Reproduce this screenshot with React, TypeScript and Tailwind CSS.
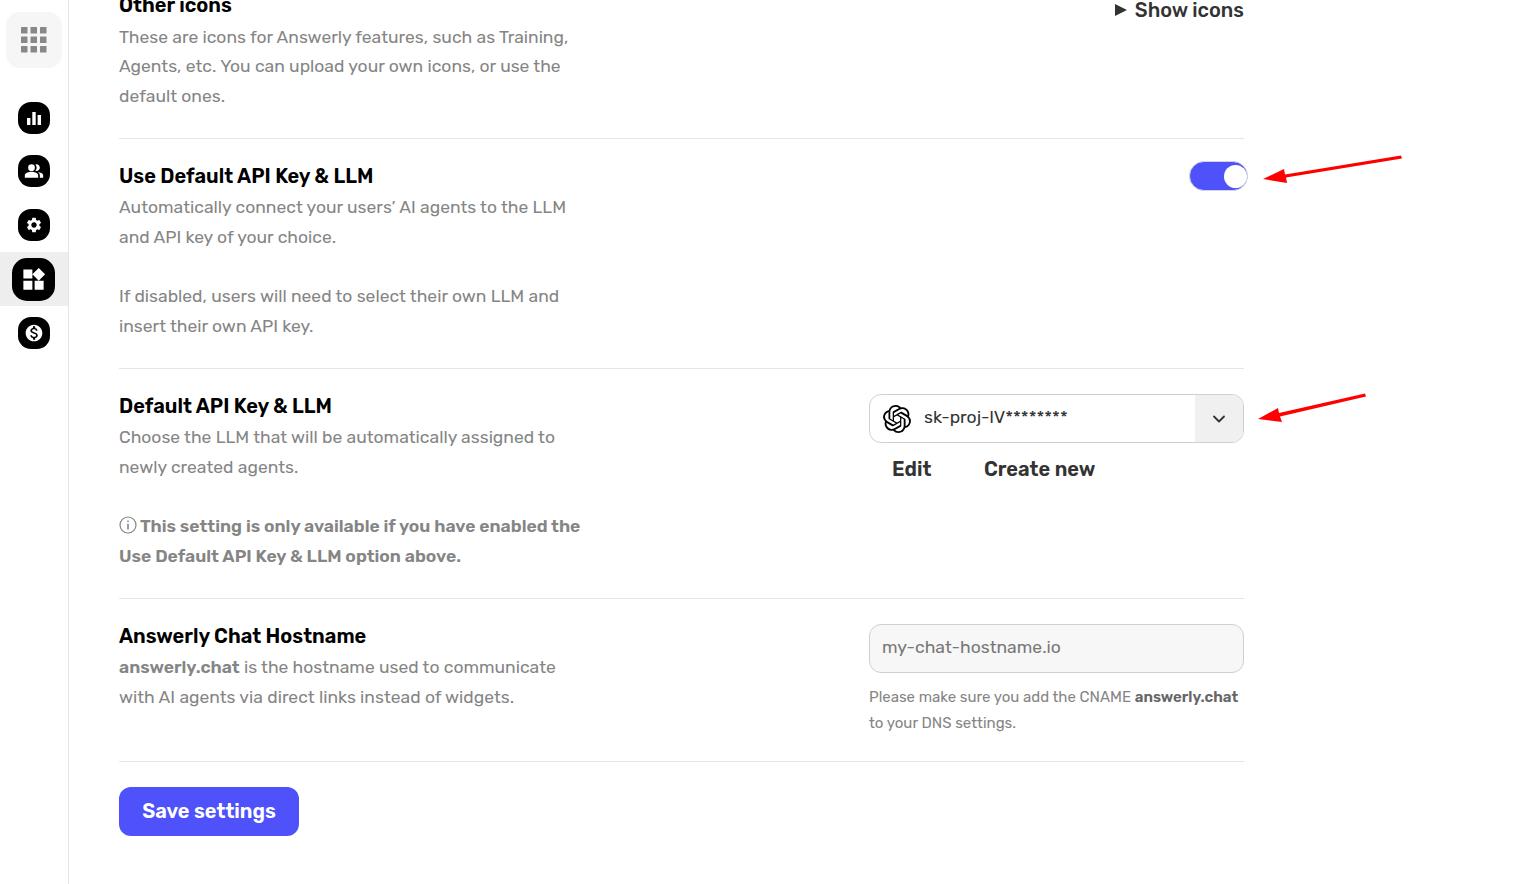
import { ChevronDown } from 'lucide-react'
import { MdPeopleAlt, MdSettings, MdWidgets, MdMonetizationOn } from 'react-icons/md'
import { SiOpenai } from 'react-icons/si'
import type { ReactNode } from 'react'

function SideIcon({ children, active, low }: { children: ReactNode; active?: boolean; low?: boolean }) {
  return (
    <div className={`flex h-[54px] w-full items-center justify-center ${active ? 'bg-[#eeeeee]' : ''}`}>
      <div
        className={`flex items-center justify-center bg-black text-white ${
          active ? 'mr-[1px] h-[43px] w-[43px] rounded-[15px]' : 'h-[32px] w-[32px] rounded-[13px]'
        } ${low ? 'translate-y-[1px]' : ''}`}
      >
        {children}
      </div>
    </div>
  )
}

function Sidebar() {
  return (
    <aside className="flex h-[884px] w-[69px] shrink-0 flex-col items-center border-r border-[#e5e5e5]">
      <div className="mt-[12px] flex h-[56px] w-[56px] items-center justify-center rounded-[14px] bg-[#f6f6f6]">
        <svg width="26" height="26" viewBox="0 0 26 26" fill="#888888">
          <rect x="0" y="0" width="6.5" height="6.5" rx="0.5" />
          <rect x="9.5" y="0" width="6.5" height="6.5" rx="0.5" />
          <rect x="19" y="0" width="6.5" height="6.5" rx="0.5" />
          <rect x="0" y="9.5" width="6.5" height="6.5" rx="0.5" />
          <rect x="9.5" y="9.5" width="6.5" height="6.5" rx="0.5" />
          <rect x="19" y="9.5" width="6.5" height="6.5" rx="0.5" />
          <rect x="0" y="19" width="6.5" height="6.5" rx="0.5" />
          <rect x="9.5" y="19" width="6.5" height="6.5" rx="0.5" />
          <rect x="19" y="19" width="6.5" height="6.5" rx="0.5" />
        </svg>
      </div>
      <div className="mt-[22px] flex w-full flex-col">
        <SideIcon low>
          <svg width="14" height="14" viewBox="0 0 14 14" fill="#ffffff">
            <rect x="0" y="7" width="3.4" height="7" />
            <rect x="5.3" y="1" width="3.4" height="13" />
            <rect x="10.6" y="4" width="3.4" height="10" />
          </svg>
        </SideIcon>
        <SideIcon>
          <MdPeopleAlt size={20} />
        </SideIcon>
        <SideIcon>
          <MdSettings size={18} />
        </SideIcon>
        <SideIcon active>
          <MdWidgets size={27} />
        </SideIcon>
        <SideIcon>
          <MdMonetizationOn size={20} />
        </SideIcon>
      </div>
    </aside>
  )
}

function Row({ title, children, right }: { title: string; children: ReactNode; right?: ReactNode }) {
  return (
    <section className="flex justify-between border-b border-[#e5e5e5] pt-[23px]">
      <div className="w-[470px]">
        <h3 className="mb-[2px] text-[20px] leading-[29px] font-semibold text-black">{title}</h3>
        <div className="text-[17.5px] leading-[29.75px] text-[#858585]">{children}</div>
      </div>
      {right}
    </section>
  )
}

export default function App() {
  return (
    <div className="relative flex h-[884px] overflow-hidden bg-white font-['Rubik','Inter','Noto_Sans',sans-serif]">
      <Sidebar />
      <main className="ml-[50px] w-[1125px]">
        {/* scrolled page: top of the first section is cut off */}
        <section className="-mt-[7px] flex h-[146px] justify-between border-b border-[#e5e5e5]">
          <div className="w-[470px]">
            <h3 className="text-[20px] leading-[24px] font-semibold text-black">Other icons</h3>
            <p className="mt-[5.5px] text-[17.5px] leading-[29.75px] text-[#858585]">
              These are icons for Answerly features, such as Training, Agents, etc. You can upload your own icons, or
              use the default ones.
            </p>
          </div>
          <div className="flex h-[34px] items-center gap-[8px] text-[20px] font-medium text-[#333333]">
            <span className="h-0 w-0 border-y-[6px] border-l-[12px] border-y-transparent border-l-[#333333]" />
            Show icons
          </div>
        </section>

        <Row
          title="Use Default API Key & LLM"
          right={
            <div className="-mt-[1px] -mr-[4px] flex h-[30px] w-[59px] items-center justify-end rounded-full border border-[#d4d4dc] bg-[#4f52fb]">
              <span className="h-[23px] w-[23px] rounded-full bg-white" />
            </div>
          }
        >
          <p className="w-[460px]">Automatically connect your users’ AI agents to the LLM and API key of your choice.</p>
          <p className="mt-[29.75px] mb-[26.25px] w-[460px]">
            If disabled, users will need to select their own LLM and insert their own API key.
          </p>
        </Row>

        <Row
          title="Default API Key & LLM"
          right={
            <div className="mt-[2px] w-[375px]">
              <div className="flex h-[49px] items-stretch overflow-hidden rounded-[12px] border border-[#cfcfcf]">
                <div className="flex flex-1 items-center pl-[13px] text-[#333333]">
                  <SiOpenai size={28} className="text-black" />
                  <span className="ml-[13px] -translate-y-[1px] text-[17.5px]">sk-proj-lV********</span>
                </div>
                <div className="flex w-[48px] items-center justify-center bg-[#f0f0f0]">
                  <ChevronDown size={20} strokeWidth={2.2} className="text-[#333333]" />
                </div>
              </div>
              <div className="mt-[11px] flex pl-[23px] text-[20px] font-semibold text-[#333333]">
                <span>Edit</span>
                <span className="ml-[52.5px]">Create new</span>
              </div>
            </div>
          }
        >
          <p className="w-[450px]">Choose the LLM that will be automatically assigned to newly created agents.</p>
          <p className="mt-[29.75px] mb-[26.25px] w-[475px] font-semibold">
            <svg className="mr-[3px] inline-block align-[-2px]" width="18" height="18" viewBox="0 0 18 18" fill="none" stroke="#858585" strokeWidth="1.2">
              <circle cx="9" cy="9" r="8" />
              <path d="M9 4.5v1.6M9 7.8v5.6" strokeWidth="1.6" />
            </svg>
            This setting is only available if you have enabled the Use Default API Key &amp; LLM option above.
          </p>
        </Row>

        <Row
          title="Answerly Chat Hostname"
          right={
            <div className="mt-[2px] w-[375px]">
              <div className="flex h-[49px] items-center rounded-[12px] border border-[#cfcfcf] bg-[#f7f7f7] pb-[2px] pl-[12px] text-[17.5px] text-[#777777]">
                my-chat-hostname.io
              </div>
              <p className="mt-[11px] mb-[25px] text-[15px] leading-[26px] text-[#858585]">
                Please make sure you add the CNAME <span className="font-semibold text-[#666666]">answerly.chat</span> to
                your DNS settings.
              </p>
            </div>
          }
        >
          <p className="w-[450px]">
            <span className="font-semibold">answerly.chat</span> is the hostname used to communicate with AI agents via
            direct links instead of widgets.
          </p>
        </Row>

        <button className="mt-[25px] flex h-[49px] w-[180px] items-center justify-center rounded-[12px] bg-[#4f52fb] pb-[2px] text-[20px] font-semibold text-white">
          Save settings
        </button>
      </main>

      {/* annotation arrows drawn over the screenshot */}
      <svg className="pointer-events-none absolute inset-0" width="1519" height="884" fill="#ff0000">
        <polygon points="1263,179 1284,169 1285,174.5 1401,155.5 1402,158.5 1286,177.5 1287,183" />
        <polygon points="1258,419 1278,408 1279,413 1365,393.5 1366,396.5 1280,416.5 1282,422" />
      </svg>
    </div>
  )
}
